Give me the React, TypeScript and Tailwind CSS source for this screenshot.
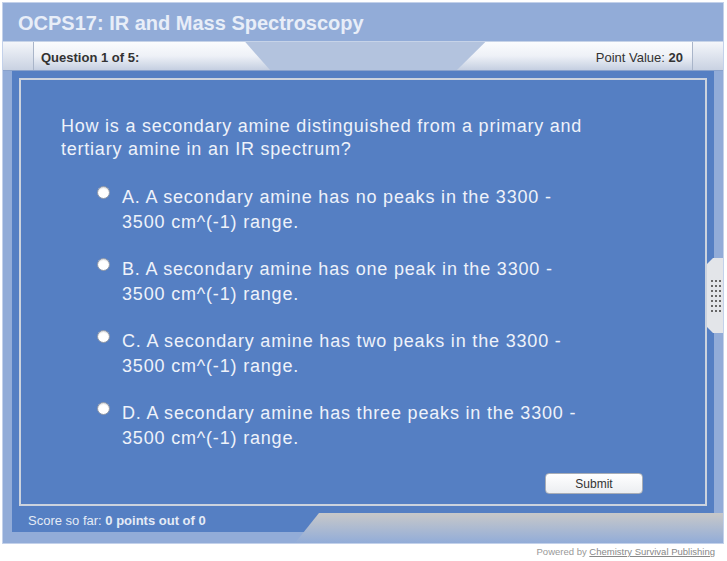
import React from "react";

const options = [
  ["A. A secondary amine has no peaks in the 3300 -", "3500 cm^(-1) range."],
  ["B. A secondary amine has one peak in the 3300 -", "3500 cm^(-1) range."],
  ["C. A secondary amine has two peaks in the 3300 -", "3500 cm^(-1) range."],
  ["D. A secondary amine has three peaks in the 3300 -", "3500 cm^(-1) range."],
];

export default function App() {
  return (
    <div className="w-[727px] h-[561px] bg-white" style={{ fontFamily: '"Liberation Sans", Arial, sans-serif' }}>
      <div className="pt-[2px] pl-[2px]">
        <div className="relative w-[722px] h-[542px] bg-[#92acd8] border border-[#c3d1ea] flex flex-col">
          {/* Title */}
          <div className="h-[38px] flex items-center pl-[15px] pt-[2px] text-[20px] font-bold text-[#e8eef8]">
            OCPS17: IR and Mass Spectroscopy
          </div>
          {/* Tab bar */}
          <div className="relative h-[30px] bg-[#b3c3de] border-t border-[#c6d3e8] border-b border-b-[#8aa2cb] flex">
            <div className="w-[31px] h-full bg-gradient-to-b from-[#f4f6fa] to-[#c9d2e2] border-r border-[#a9b5c9]" />
            <div className="w-[236px] h-full bg-gradient-to-b from-[#fbfcfe] via-[#eef1f7] to-[#c5cfe1] [clip-path:polygon(0_0,89.5%_0,100%_100%,0_100%)] flex items-center pl-[7px] pt-[3px] text-[13px] font-bold text-[#333]">
              Question 1 of 5:
            </div>
            <div className="flex-1" />
            <div className="w-[236px] h-full bg-gradient-to-b from-[#fbfcfe] via-[#eef1f7] to-[#c5cfe1] [clip-path:polygon(12%_0,100%_0,100%_100%,0_100%)] flex items-center justify-end pr-[9px] pt-[3px] text-[13px] text-[#333] border-r border-[#a9b5c9]">
              Point Value:&nbsp;<span className="font-bold">20</span>
            </div>
            <div className="w-[30px] h-full bg-gradient-to-b from-[#f4f6fa] to-[#c9d2e2]" />
          </div>
          {/* Body */}
          <div className="flex-1 flex pl-[9px] pr-[8px]">
            <div className="w-[702px] h-[461px] bg-[#557fc3] flex flex-col pt-[7px] px-[7px]">
              <div className="h-[428px] border-2 border-[#ccd3de] flex flex-col text-[#eef2fa]">
                <div className="pl-[40px] pt-[35px] text-[18px] leading-[23px] tracking-[0.77px]">
                  How is a secondary amine distinguished from a primary and
                  <br />
                  tertiary amine in an IR spectrum?
                </div>
                <div className="flex flex-col gap-[22px] pt-[24px] pl-[76px]">
                  {options.map((o, i) => (
                    <div key={i} className="flex">
                      <div className="w-[25px] pt-[1px]">
                        <div className="w-[13px] h-[13px] rounded-full bg-white border border-[#8d96a6] shadow-[inset_0_1px_1px_rgba(0,0,0,0.15)]" />
                      </div>
                      <div className="text-[18px] leading-[25px] tracking-[0.82px]">
                        {o[0]}
                        <br />
                        {o[1]}
                      </div>
                    </div>
                  ))}
                </div>
                <div className="flex-1" />
                <div className="flex justify-end pr-[62px] pb-[10px]">
                  <button className="w-[98px] h-[21px] rounded-[4px] border border-[#a8adb6] bg-gradient-to-b from-white to-[#eceef1] text-[12px] text-[#333] leading-none">
                    Submit
                  </button>
                </div>
              </div>
              <div className="h-[26px] flex items-center pl-[9px] pt-[3px] text-[13px] text-[#e4ebf6]">
                Score so far:&nbsp;<span className="font-bold">0 points out of 0</span>
              </div>
            </div>
          </div>
          {/* bottom gray slanted bar */}
          <div className="absolute left-[292px] right-0 bottom-0 h-[30px] bg-gradient-to-b from-[#c8c8c8] to-[#92acd8] [clip-path:polygon(24px_0,100%_0,100%_100%,0_100%)]" />
          {/* right handle */}
          <div className="absolute right-0 top-[255px] w-[16px] h-[75px] bg-[#e3e5e9] [clip-path:polygon(6px_0,100%_0,100%_100%,6px_100%,0_92%,0_8%)] flex flex-col items-center justify-center gap-[3px] pl-[2px]">
            {Array.from({ length: 7 }).map((_, r) => (
              <div key={r} className="flex gap-[2px]">
                <div className="w-[2px] h-[2px] bg-[#666]" />
                <div className="w-[2px] h-[2px] bg-[#666]" />
                <div className="w-[2px] h-[2px] bg-[#666]" />
              </div>
            ))}
          </div>
        </div>
        <div className="flex justify-end pr-[12px] pt-[1px] text-[9.5px] text-[#999]">
          Powered by&nbsp;<span className="underline text-[#888]">Chemistry Survival Publishing</span>
        </div>
      </div>
    </div>
  );
}
